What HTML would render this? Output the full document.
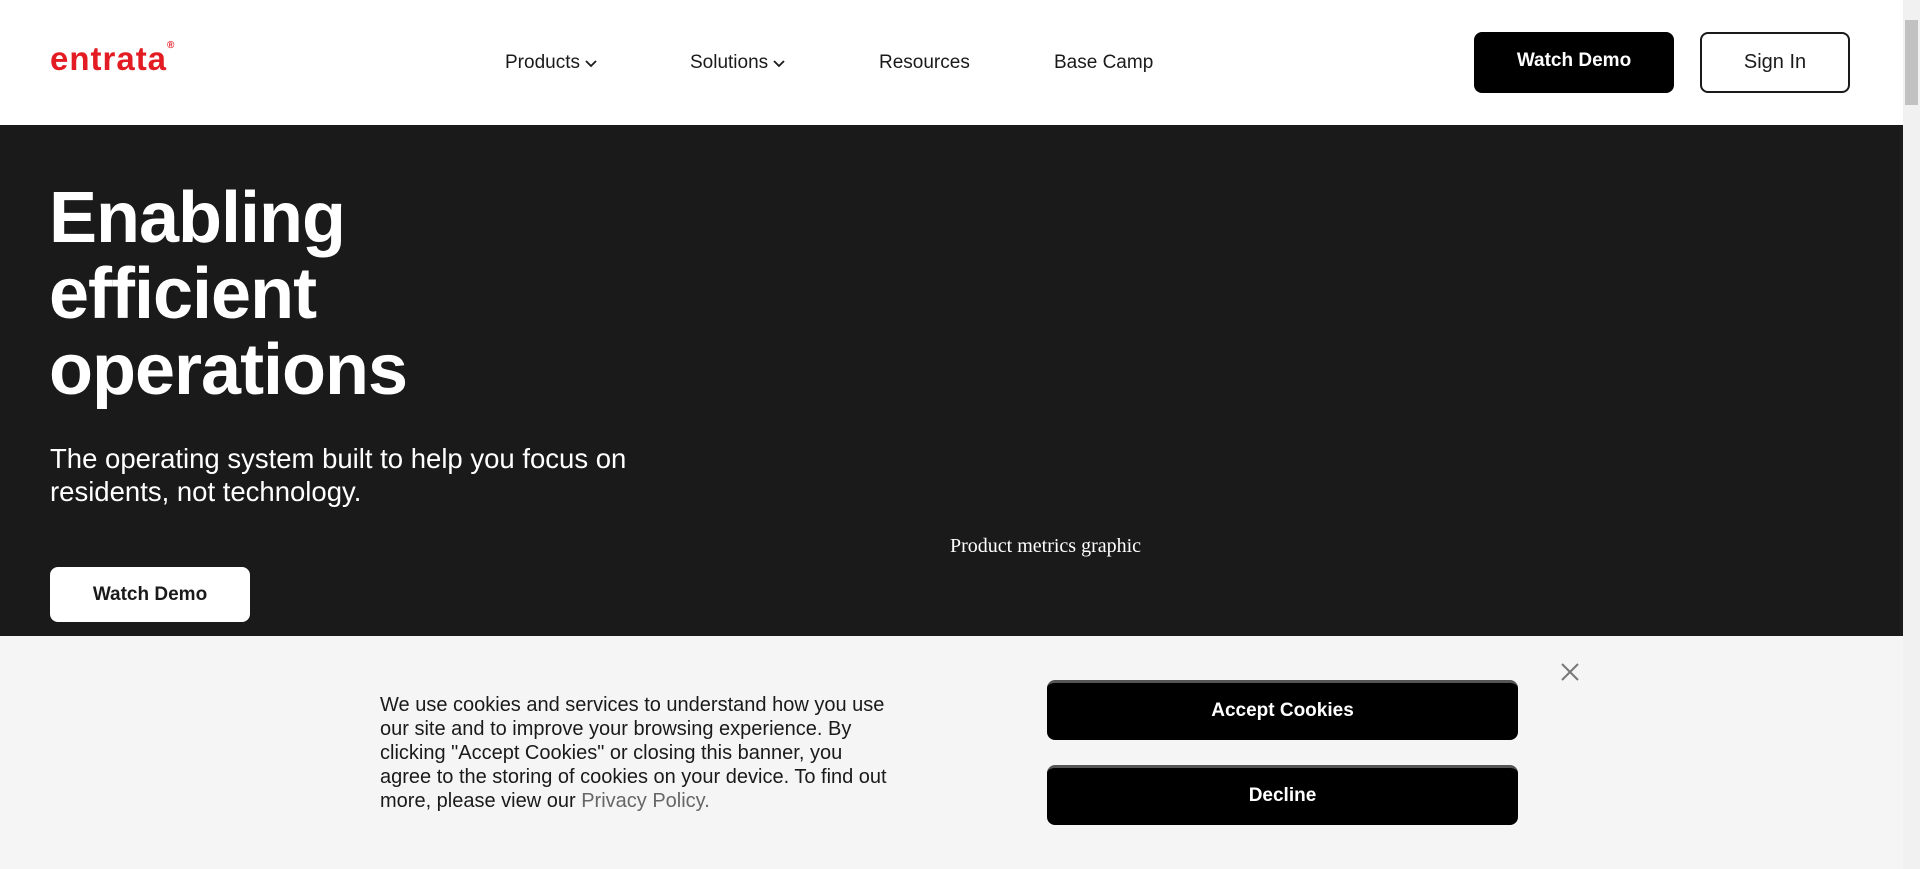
<!DOCTYPE html>
<html><head><style>
*{margin:0;padding:0;box-sizing:border-box}
body{width:1920px;height:869px;overflow:hidden;font-family:"Liberation Sans",sans-serif;background:#fff;position:relative}
.a{position:absolute}
.nav{font-size:19px;color:#1a1a1a;top:52px}
.sb{right:0;top:0;width:17px;height:869px;background:#f1f1f1}
</style></head><body>
<div class="a" style="left:0;top:0;width:1903px;height:125px;background:#fff"></div>
<div class="a" style="left:50px;top:40px;font-size:33px;font-weight:bold;color:#e31b23;letter-spacing:1px">entrata<span style="font-size:10px;vertical-align:top">®</span></div>
<div class="a nav" style="left:505px">Products <svg width="12" height="8" viewBox="0 0 12 8"><path d="M1 1l5 5 5-5" stroke="#1a1a1a" stroke-width="1.8" fill="none"/></svg></div>
<div class="a nav" style="left:690px">Solutions <svg width="12" height="8" viewBox="0 0 12 8"><path d="M1 1l5 5 5-5" stroke="#1a1a1a" stroke-width="1.8" fill="none"/></svg></div>
<div class="a nav" style="left:879px">Resources</div>
<div class="a nav" style="left:1054px">Base Camp</div>
<div class="a" style="left:1474px;top:32px;width:200px;height:61px;background:#000;border-radius:8px;color:#fff;font-weight:bold;font-size:19px;text-align:center;line-height:58px">Watch Demo</div>
<div class="a" style="left:1700px;top:32px;width:150px;height:61px;border:2px solid #1a1a1a;border-radius:8px;color:#1a1a1a;font-size:20px;text-align:center;line-height:57px">Sign In</div>
<div class="a" style="left:0;top:125px;width:1903px;height:511px;background:#1a1a1a"></div>
<div class="a" style="left:49px;top:180px;color:#fff;font-size:72px;font-weight:bold;line-height:76px;letter-spacing:-1px">Enabling<br>efficient<br>operations</div>
<div class="a" style="left:50px;top:442px;color:#fff;font-size:27.5px;line-height:33px">The operating system built to help you focus on<br>residents, not technology.</div>
<div class="a" style="left:50px;top:567px;width:200px;height:55px;background:#fff;border-radius:8px;color:#1a1a1a;font-weight:bold;font-size:19px;text-align:center;line-height:55px">Watch Demo</div>
<div class="a" style="left:950px;top:535px;color:#fff;font-family:'Liberation Serif',serif;font-size:20px">Product metrics graphic</div>
<div class="a" style="left:0;top:636px;width:1903px;height:233px;background:#f5f5f5"></div>
<div class="a" style="left:380px;top:693px;font-size:20px;line-height:24px;color:#1a1a1a;width:600px">We use cookies and services to understand how you use<br>our site and to improve your browsing experience. By<br>clicking "Accept Cookies" or closing this banner, you<br>agree to the storing of cookies on your device. To find out<br>more, please view our <span style="color:#666">Privacy Policy.</span></div>
<div class="a" style="left:1047px;top:680px;width:471px;height:60px;background:#000;border-top:3px solid #555;border-radius:8px;color:#fff;font-weight:bold;font-size:19px;text-align:center;line-height:55px">Accept Cookies</div>
<div class="a" style="left:1047px;top:765px;width:471px;height:60px;background:#000;border-top:3px solid #555;border-radius:8px;color:#fff;font-weight:bold;font-size:19px;text-align:center;line-height:55px">Decline</div>
<svg class="a" style="left:1560px;top:662px" width="20" height="20" viewBox="0 0 20 20"><path d="M2 2l16 16M18 2L2 18" stroke="#777" stroke-width="2"/></svg>
<div class="a sb"><div style="margin:20px 2px;height:85px;background:#c1c1c1"></div></div>
</body></html>
